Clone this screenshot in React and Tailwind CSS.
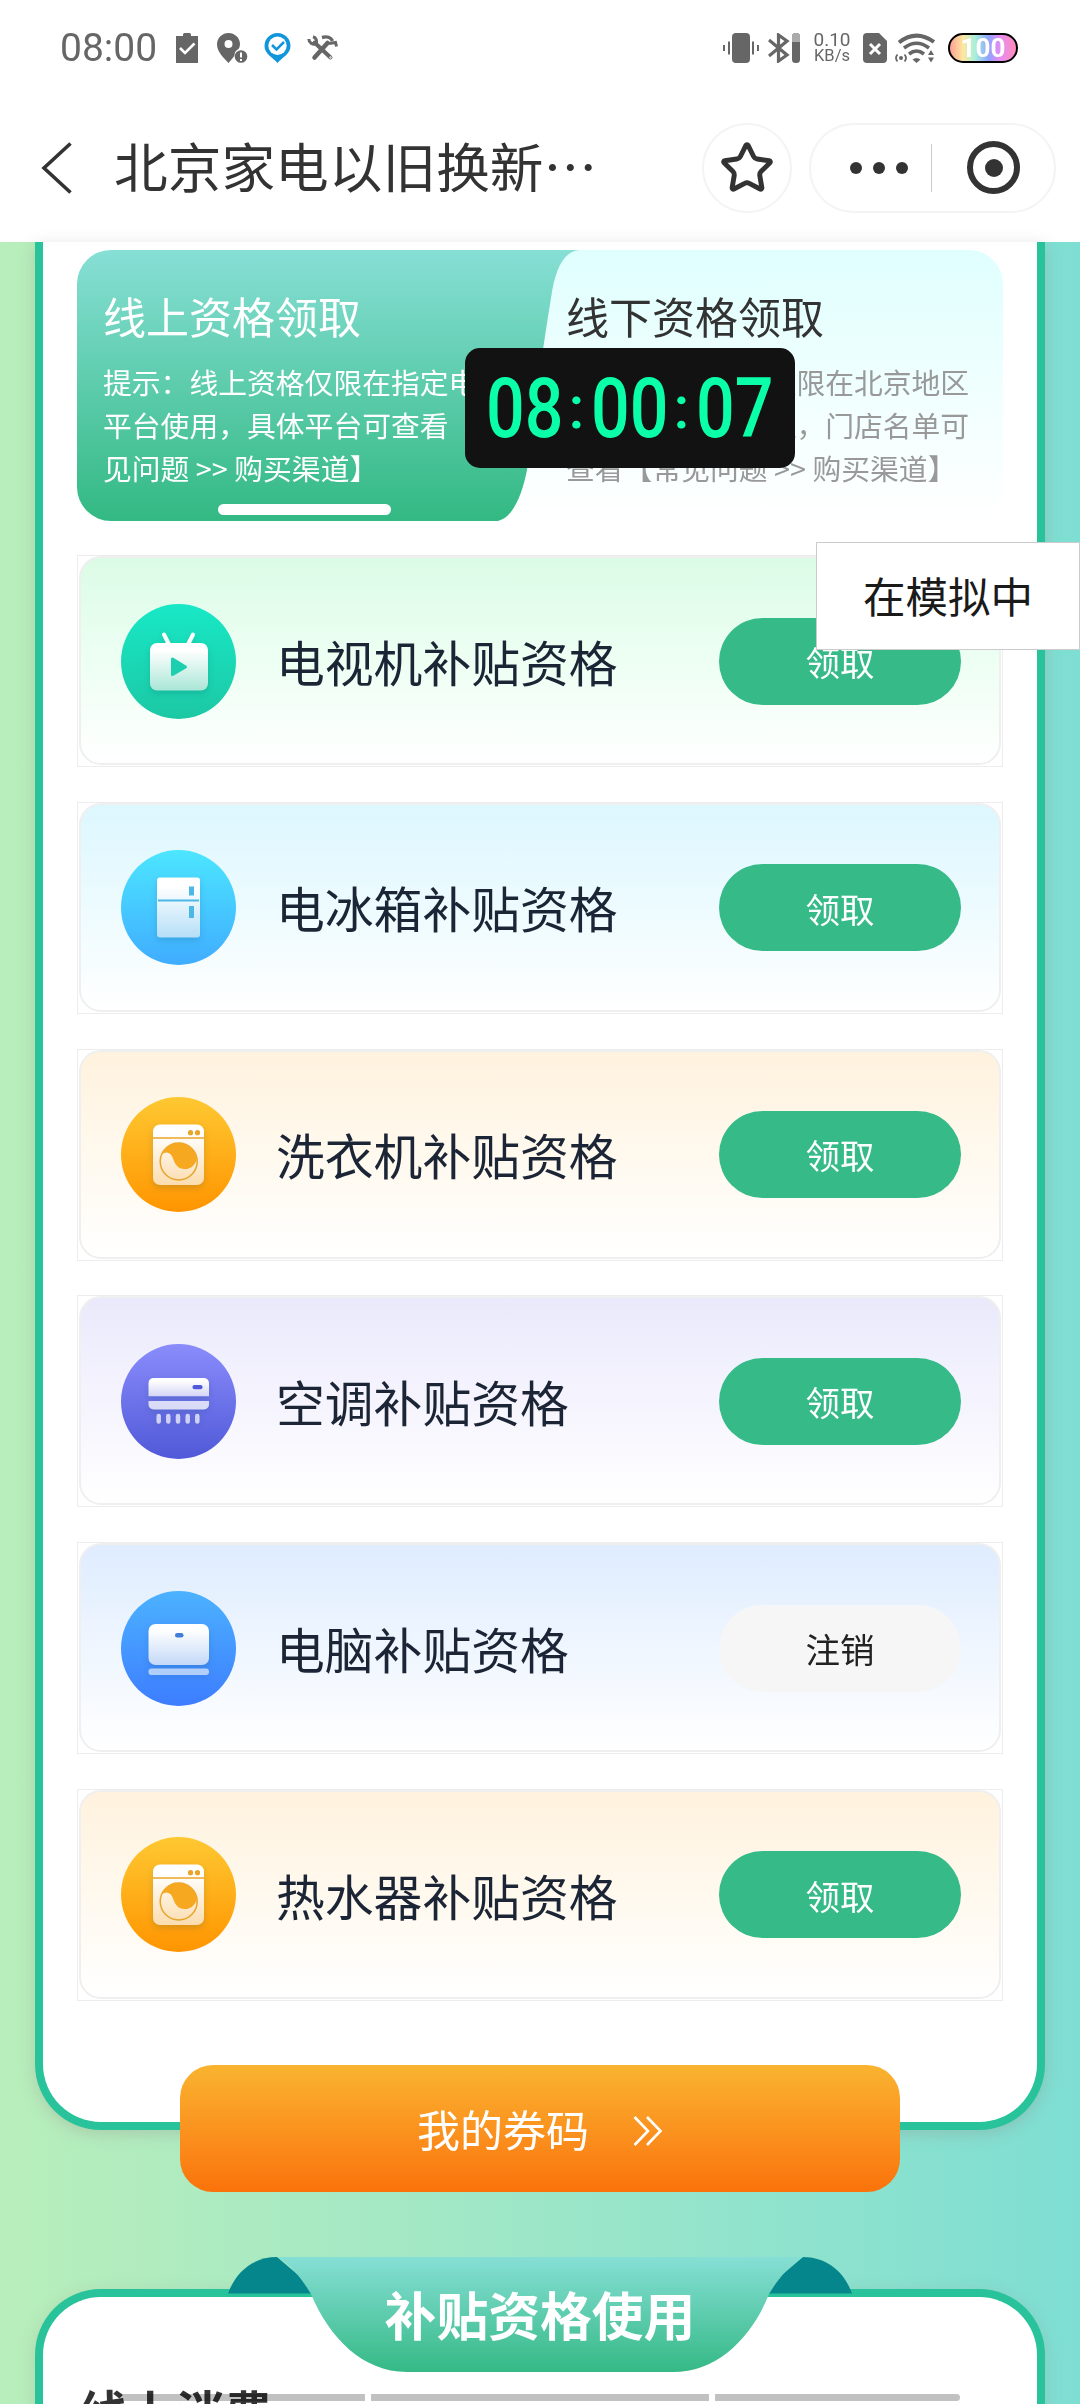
import { Star } from "lucide-react";

const rows = [
  { name: "电视机补贴资格", icon: "tv", bg: "from-[#dbfbe6] via-[#edfff3]" },
  { name: "电冰箱补贴资格", icon: "fridge", bg: "from-[#dcf7fe] via-[#edfbff]" },
  { name: "洗衣机补贴资格", icon: "washer", bg: "from-[#fff2de] via-[#fff9ee]" },
  { name: "空调补贴资格", icon: "air", bg: "from-[#eae9fb] via-[#f5f4fe]" },
  { name: "电脑补贴资格", icon: "computer", bg: "from-[#deecfe] via-[#eff6ff]", claimed: true },
  { name: "热水器补贴资格", icon: "washer", bg: "from-[#fff2de] via-[#fff9ee]" },
];

const iconColors = {
  tv: ["#18e8c6", "#1cc8a4", "#a9e6d6"],
  fridge: ["#4ce6ff", "#40acff", "#b5dff8"],
  washer: ["#fec832", "#ff9500", "#fbdcae"],
  air: ["#8a8cfb", "#5059d8", "#d3d5f6"],
  computer: ["#4cb2ff", "#3d7dff", "#c3d8f8"],
};

function Glyph({ type, id }) {
  const fill = `url(#body-${id})`;
  const [, dark] = iconColors[type];

  if (type === "tv") {
    return (
      <>
        <path d="M43 30.500l5 10M72 30.500l-5 10" stroke="#fff" strokeWidth="4" strokeLinecap="round" />
        <rect x="29" y="39" width="58" height="47.500" rx="7" fill={fill} />
        <path d="M51.500 55v15.500L64.500 63z" fill="#1dcfae" stroke="#1dcfae" strokeWidth="3" strokeLinejoin="round" />
      </>
    );
  }
  if (type === "fridge") {
    return (
      <>
        <rect x="36" y="27.500" width="43" height="60" rx="3" fill={fill} />
        <path d="M37 50.500h41" stroke="#4bb8e6" strokeWidth="2" />
        <path d="M70.500 36.500v9M70.500 56v12" stroke="#4bb8e6" strokeWidth="5" />
      </>
    );
  }
  if (type === "washer") {
    return (
      <>
        <rect x="32" y="27.500" width="51" height="60.500" rx="7" fill={fill} />
        <path d="M32 41h51" stroke="#e8a52a" strokeWidth="1.500" />
        <circle cx="69.500" cy="35.700" r="2.600" fill="#e8a52a" />
        <circle cx="76.500" cy="35.700" r="2.600" fill="#e8a52a" />
        <circle cx="57.700" cy="64.500" r="18.500" fill="none" stroke="#e8a52a" strokeWidth="1.500" />
        <path
          d="M40.500 57.500C43.500 50.500 50 46 57.700 46c10 0 17.500 7.500 18 17C73 69.500 69 72 64 72 56.500 72 54 67 52 61.500 50 55.500 45.500 53.500 40.500 57.500z"
          fill="#f5a820"
        />
      </>
    );
  }
  if (type === "air") {
    return (
      <>
        <path d="M27.500 52.300V39a5 5 0 0 1 5-5H83a5 5 0 0 1 5 5v13.300z" fill={fill} />
        <path d="M27.500 57H88v3.500a5 5 0 0 1-5 5H32.500a5 5 0 0 1-5-5z" fill="#d9dbf7" />
        <rect x="71.500" y="41" width="10" height="4.200" rx="2" fill={dark} />
        <path d="M37.700 72v5.500M47.300 72v5.500M57 72v5.500M66.700 72v5.500M76.300 72v5.500" stroke="#fff" strokeOpacity=".7" strokeWidth="4.500" strokeLinecap="round" />
      </>
    );
  }
  return (
    <>
      <rect x="27.500" y="33" width="60.500" height="41" rx="7" fill={fill} />
      <rect x="54" y="42" width="8.500" height="4.600" rx="2.300" fill="#3f7fd8" />
      <rect x="27.500" y="77.500" width="60.500" height="6.500" rx="3" fill="#fff" fillOpacity=".6" />
    </>
  );
}

function ApplianceIcon({ type, id }) {
  const [top, bottom, shade] = iconColors[type];
  return (
    <svg viewBox="0 0 115 115" className="size-[115px] shrink-0" fill="none">
      <defs>
        <linearGradient id={`disc-${id}`} x1="0" y1="0" x2="0" y2="1">
          <stop stopColor={top} />
          <stop offset="1" stopColor={bottom} />
        </linearGradient>
        <linearGradient id={`body-${id}`} x1="0" y1="0" x2="0" y2="1">
          <stop offset=".15" stopColor="#fff" />
          <stop offset="1" stopColor={shade} />
        </linearGradient>
      </defs>
      <circle cx="57.500" cy="57.500" r="57.500" fill={`url(#disc-${id})`} />
      <g className="drop-shadow-[0_3px_3px_rgba(0,60,90,0.16)]">
        <Glyph type={type} id={id} />
      </g>
    </svg>
  );
}

function StatusBar() {
  return (
    <div className="flex h-24 items-center pl-[60px] pr-[62px] text-[#666]">
      <span className="w-[98px] font-['Roboto'] text-[39px] leading-none">08:00</span>
      <svg viewBox="0 0 22 30" className="ml-[18px] h-[30px] w-[22px]">
        <path d="M0 3h7V1.500Q7 0 8.500 0h5Q15 0 15 1.500V3h7v27H0z" fill="currentColor" />
        <path d="M4 15l5 5 9.500-9.500" fill="none" stroke="#fff" strokeWidth="2.600" />
      </svg>
      <svg viewBox="0 0 31 30" className="ml-[19px] h-[30px] w-[31px]" fill="currentColor">
        <path fillRule="evenodd" d="M11.500 0A11.500 11.500 0 0 0 0 11.500C0 19 7.500 25.500 11.500 30c1.500-2 4-4.500 6-7.500a7 7 0 0 1 4-6.500q1.500-2.500 1.500-4.500A11.500 11.500 0 0 0 11.500 0zm0 7a4 4 0 1 1 0 8 4 4 0 0 1 0-8z" />
        <circle cx="24" cy="23.500" r="6.300" />
        <path d="M24 19.500v5M24 26v2" stroke="#fff" strokeWidth="2" />
      </svg>
      <svg viewBox="0 0 27 30" className="ml-4 h-[30px] w-[27px]">
        <path d="M13.500 0A13 13 0 0 0 .5 13C.5 21 9 24.500 13.500 30 18 24.500 26.500 21 26.500 13a13 13 0 0 0-13-13z" fill="#1296db" />
        <circle cx="13.500" cy="12.700" r="9.200" fill="#fff" />
        <path d="M8 12l4.500 4.500L20 9" fill="none" stroke="#1296db" strokeWidth="2.500" />
      </svg>
      <svg viewBox="0 0 31 26" className="ml-4 h-[26px] w-[31px]" fill="none" stroke="currentColor">
        <path d="M7.500 7.500L23.500 22.500" strokeWidth="4" strokeLinecap="round" />
        <path d="M20.500 8L7.500 22.500" strokeWidth="4.500" strokeLinecap="round" />
        <path d="M1.800 4A5.500 5.500 0 0 0 9 9 5 5 0 0 0 6 1.800" strokeWidth="3" />
        <path d="M15 2.500c5-1.500 9 0 10.500 3.500" strokeWidth="3.400" />
        <path d="M22 8.500L28.500 7.500l1 4" strokeWidth="3" />
        <circle cx="23.500" cy="22.500" r=".8" stroke="#fff" />
      </svg>

      <svg viewBox="0 0 36 30" className="ml-auto h-[30px] w-9" fill="currentColor">
        <rect x="9" width="18" height="30" rx="4" />
        <path d="M1 12v6M6 8.500v13M30 8.500v13M35 12v6" stroke="currentColor" strokeWidth="2" />
      </svg>
      <svg viewBox="0 0 32 30" className="ml-[9px] h-[30px] w-8" fill="none" stroke="currentColor">
        <path d="M1 7l18 15-8.500 6V2L19 8 1 23" strokeWidth="3.200" />
        <rect x="24" width="8" height="30" rx="3.500" fill="currentColor" stroke="none" />
        <path d="M24 9V3.500Q24 0 28 0t4 3.500V9z" fill="#aaa" stroke="none" />
      </svg>
      <div className="ml-[14px] flex w-9 flex-col items-center font-['Roboto'] leading-none">
        <span className="text-[19px] leading-[16px]">0.10</span>
        <span className="text-[16.500px] leading-[16px]">KB/s</span>
      </div>
      <svg viewBox="0 0 24 30" className="ml-[13px] h-[30px] w-6">
        <path d="M4 0h12l8 8v18q0 4-4 4H4q-4 0-4-4V4q0-4 4-4z" fill="currentColor" />
        <path d="M7 11l10 10M17 11L7 21" stroke="#fff" strokeWidth="3" />
      </svg>
      <svg viewBox="0 0 40 30" className="ml-2 h-[30px] w-10" fill="none" stroke="currentColor">
        <path d="M4 9.500q17-13.500 35-0.500" strokeWidth="4" />
        <path d="M9 15q12.500-9.500 25 0" strokeWidth="3.600" />
        <path d="M14 21q7.500-6 15 0" strokeWidth="3.600" />
        <path d="M17.500 26.500q4-3 8 0L21.500 30z" fill="currentColor" stroke="none" />
        <circle cx="6" cy="25" r="2" fill="currentColor" stroke="none" />
        <path d="M2.500 21.500q-3 3.500 0 7M9.500 21.500q3 3.500 0 7" strokeWidth="1.800" />
        <path d="M33 22l3-5 3 5zM33 24.500l3 5 3-5z" fill="currentColor" stroke="none" />
      </svg>
      <div className="ml-[13px] flex h-[30px] w-[70px] items-center justify-center rounded-full border-2 border-black bg-[linear-gradient(90deg,#ffa096,#fde8a0_20%,#a8f0dc_38%,#8ea4ff_58%,#e58cf5_75%,#ff8cb8)] font-['Roboto'] text-[26px] font-bold leading-none text-white">
        100
      </div>
    </div>
  );
}

function TitleBar() {
  return (
    <div className="flex h-[146px] items-center pb-[3px] pl-[41px] pr-6 text-[#333]">
      <svg viewBox="0 0 31 52" className="h-[52px] w-[31px]" fill="none" stroke="currentColor" strokeWidth="3.600">
        <path d="M29.500 1.500L3 26l26.500 24.500" />
      </svg>
      <h1 className="ml-[42px] whitespace-nowrap pb-[5px] text-[53.700px] leading-none">北京家电以旧换新…</h1>
      <button className="ml-auto grid size-[90px] place-items-center rounded-full border-2 border-[#f4f4f4]">
        <Star className="size-[56px]" strokeWidth={2.1} strokeLinejoin="miter" />
      </button>
      <div className="ml-[17px] flex h-[90px] w-[247px] items-center rounded-full border-2 border-[#f4f4f4] pl-[39px]">
        <div className="flex gap-[11px]">
          <i className="size-[12px] rounded-full bg-[#333]" />
          <i className="size-[12px] rounded-full bg-[#333]" />
          <i className="size-[12px] rounded-full bg-[#333]" />
        </div>
        <div className="ml-[23px] h-12 w-px bg-[#ccc]" />
        <div className="ml-[35px] grid size-[53px] place-items-center rounded-full border-[6px] border-[#333]">
          <i className="size-[18px] rounded-full bg-[#333]" />
        </div>
      </div>
    </div>
  );
}

function Tabs() {
  return (
    <div className="relative flex h-[271px] rounded-[34px] bg-linear-to-b from-[#dffffe] to-white">
      <svg viewBox="0 0 503 271" className="absolute left-0 top-0 h-[271px] w-[503px]">
        <defs>
          <linearGradient id="tab" x1="0" y1="0" x2="0" y2="1">
            <stop stopColor="#87dfd5" />
            <stop offset="1" stopColor="#33b983" />
          </linearGradient>
        </defs>
        <path
          d="M34 0H503C486 1 478 20 474 48C464 110 458 155 450 220C444 250 434 268 421 271H34A34 34 0 0 1 0 237V34A34 34 0 0 1 34 0z"
          fill="url(#tab)"
        />
      </svg>
      <div className="relative w-[463px] whitespace-nowrap pl-[26px] pt-[42px] text-white">
        <h2 className="text-[43px] leading-[46px]">线上资格领取</h2>
        <p className="mt-[22px] text-[28.800px] leading-[43px]">
          提示：线上资格仅限在指定电
          <br />
          平台使用，具体平台可查看
          <br />
          见问题 &gt;&gt; 购买渠道】
        </p>
        <div className="absolute left-[141px] top-[254px] h-[11px] w-[173px] rounded-full bg-white" />
      </div>
      <div className="relative whitespace-nowrap pl-[26px] pt-[42px]">
        <h2 className="text-[43px] leading-[46px] text-[#333]">线下资格领取</h2>
        <p className="mt-[22px] text-[28.800px] leading-[43px] text-[#999]">
          提示：线下资格仅限在北京地区
          <br />
          使用，需到店办理，门店名单可
          <br />
          查看【常见问题 &gt;&gt; 购买渠道】
        </p>
      </div>

      {/* floating clock */}
      <div className="absolute left-[388px] top-[98px] flex h-[120px] w-[330px] items-center rounded-[15px] bg-[#121212] pl-[21px] font-['Roboto'] text-[83px] font-medium leading-none text-[#0affa8]">
        <span className="w-[76px] origin-left scale-x-[0.82]">08</span>
        <span className="flex w-[29px] justify-center text-[60px]">:</span>
        <span className="w-[76px] origin-left scale-x-[0.82]">00</span>
        <span className="flex w-[29px] justify-center text-[60px]">:</span>
        <span className="w-[76px] origin-left scale-x-[0.82]">07</span>
      </div>
    </div>
  );
}

function Row({ row, id }) {
  return (
    <li className="h-[212px] border border-[#ededed] px-px pb-px">
      <div className={`flex h-full items-center rounded-[22px] border-2 border-[#efefef] bg-linear-to-b to-white bg-origin-border pl-[40px] pr-[38px] pt-px ${row.bg}`}>
        <ApplianceIcon type={row.icon} id={id} />
        <span className="ml-[40px] text-[48.800px] leading-none text-[#1b2535]">{row.name}</span>
        <button
          className={`ml-auto h-[87px] w-[242px] rounded-full text-[34.500px] leading-none ${
            row.claimed ? "bg-[#f6f6f6] text-[#222]" : "bg-[#36bb88] text-white"
          }`}
        >
          {row.claimed ? "注销" : "领取"}
        </button>
      </div>
    </li>
  );
}

function Ribbon() {
  return (
    <div className="absolute -top-10 left-[185px] grid h-[115px] w-[624px] place-items-center">
      <svg viewBox="0 0 624 115" className="absolute inset-0 size-full">
        <defs>
          <linearGradient id="ribbon" x1="0" y1="0" x2="0" y2="1">
            <stop stopColor="#86dfd5" />
            <stop offset="1" stopColor="#35b986" />
          </linearGradient>
        </defs>
        <path d="M0 36.500C8 14 26 0 49 0L92 36.500z" fill="#05868c" />
        <path d="M624 36.500C616 14 598 0 575 0L532 36.500z" fill="#05868c" />
        <path d="M49 0H575C560 10 550 22 541 37C524 80 490 115 445 115H179C134 115 101 80 83 37C74 22 64 9 49 0z" fill="url(#ribbon)" />
      </svg>
      <h2 className="relative pb-0.5 text-[51.800px] font-bold leading-none text-white">补贴资格使用</h2>
    </div>
  );
}

export default function App() {
  return (
    <div
      lang="zh-CN"
      className="relative flex h-[2404px] w-[1080px] flex-col overflow-hidden bg-linear-to-r from-[#b8eebb] to-[#7eded3] font-['Noto_Sans_CJK_SC',sans-serif]"
    >
      <header className="h-[242px] shrink-0 bg-white">
        <StatusBar />
        <TitleBar />
      </header>

      <main className="px-[35px]">
        <section className="h-[1888px] rounded-b-[66px] border-x-8 border-b-8 border-[#28c39a] bg-white px-[34px] pt-2 shadow-[0_4px_16px_rgba(150,130,130,0.3)]">
          <Tabs />
          <ul className="mt-[34px] flex flex-col gap-[34.800px]">
            {rows.map((row, i) => (
              <Row key={row.name} row={row} id={i} />
            ))}
          </ul>
          <button className="mx-auto mt-[64px] flex h-[127px] w-[720px] items-center justify-center rounded-[33px] bg-linear-to-b from-[#f9b32f] to-[#fa720a] text-[43px] leading-none text-white">
            我的券码
            <svg viewBox="0 0 30 30" className="ml-[44px] mt-[5px] h-[30px] w-[30px]" fill="none" stroke="currentColor" strokeWidth="2.600">
              <path d="M1.500 1l13.500 14L1.500 29M14 1l13.500 14L14 29" />
            </svg>
          </button>
        </section>

        <section className="relative mt-[159px] h-[300px] rounded-t-[66px] border-x-8 border-t-8 border-[#28c39a] bg-white pl-[36px] pt-[81px] shadow-[0_4px_16px_rgba(150,130,130,0.25)]">
          <Ribbon />
          <h3 className="text-[48.500px] font-bold leading-[66px] text-[#333]">线上消费</h3>
        </section>
      </main>

      {/* system gesture bars */}
      <div className="absolute left-[120px] top-[2394px] flex gap-1.5 mix-blend-multiply">
        <i className="h-[7px] w-[245px] rounded-l-full bg-[#c1c1c1]" />
        <i className="h-[7px] w-[338px] bg-[#c1c1c1]" />
        <i className="h-[7px] w-[245px] rounded-r-full bg-[#c1c1c1]" />
      </div>

      <div className="absolute right-0 top-[542px] grid h-[108px] w-[264px] place-items-center border border-[#ccc] bg-white pb-0.5 text-[42.500px] leading-none text-[#1a1a1a]">
        在模拟中
      </div>
    </div>
  );
}
